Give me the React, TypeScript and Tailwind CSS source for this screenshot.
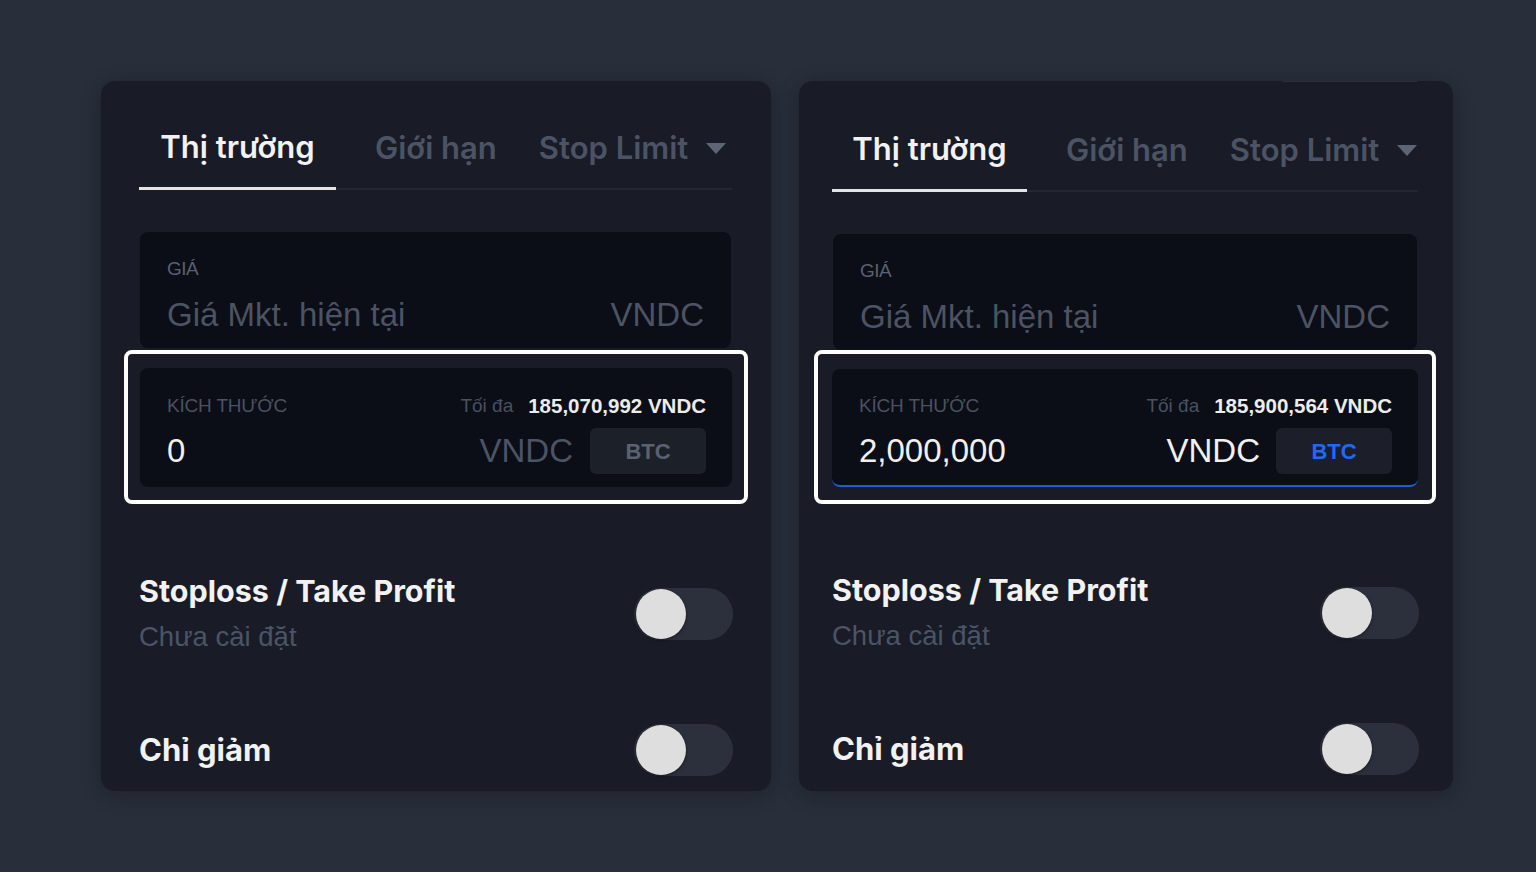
import React from "react";

const sans = { fontFamily: '"Liberation Sans", Arial, sans-serif' };
const inter = { fontFamily: 'Inter, "Noto Sans", sans-serif' };

function Toggle() {
  return (
    <div className="relative h-[52px] w-[99px] shrink-0 rounded-full bg-[#2c303c]">
      <div className="absolute left-[2px] top-[1px] h-[50px] w-[50px] rounded-full bg-[#dedede] shadow-[0_1px_3px_rgba(0,0,0,0.5)]" />
    </div>
  );
}

type CardProps = {
  variant: "left" | "right";
};

function Card({ variant }: CardProps) {
  const isRight = variant === "right";
  return (
    <div
      className={
        isRight
          ? "relative flex h-[710px] w-[654px] flex-col rounded-[14px] bg-[#191c26] pl-[33px] pr-[35px] pt-[50px] shadow-[0_4px_20px_rgba(0,0,0,0.25)]"
          : "relative flex h-[710px] w-[670px] flex-col rounded-[14px] bg-[#191c26] pl-[38px] pr-[39px] pt-[48px] shadow-[0_4px_20px_rgba(0,0,0,0.25)]"
      }
    >
      {isRight && (
        <div className="absolute right-[36px] top-0 h-[1px] w-[134px] bg-[#2a303c]" />
      )}
      {/* Tabs */}
      <div className="flex items-end border-b-2 border-[#232733]" style={inter}>
        <div className={isRight ? "-mb-[2px] w-[195px] border-b-[3px] border-[#e4e4e4] pb-[22px] text-center text-[31px] font-semibold leading-[36px] text-[#f2f2f2]" : "-mb-[2px] w-[197px] border-b-[3px] border-[#e4e4e4] pb-[22px] text-center text-[31px] font-semibold leading-[36px] text-[#f2f2f2]"}>
          Thị trường
        </div>
        <div className="ml-[39px] pb-[22px] text-[31px] font-semibold leading-[36px] text-[#4b5365]">Giới hạn</div>
        <div className="ml-[42px] flex items-center pb-[22px] text-[31px] font-semibold leading-[36px] text-[#4b5365]">
          <span>Stop Limit</span>
          <svg className="ml-[18px]" width="20" height="11" viewBox="0 0 20 11">
            <path d="M0 0 L20 0 L10 11 Z" fill="#5c6476" />
          </svg>
        </div>
      </div>

      {/* Price box */}
      <div className="mt-[42px] mx-[1px] flex h-[116px] flex-col rounded-[8px] bg-[#0b0e16] px-[27px] pt-[26px]" style={sans}>
        <div className="text-[19px] leading-[22px] tracking-[-0.03em] text-[#596071]">GIÁ</div>
        <div className="mt-[16px] flex items-center justify-between text-[33px] leading-[38px] text-[#4c5363]">
          <span>Giá Mkt. hiện tại</span>
          <span>VNDC</span>
        </div>
      </div>

      {/* Highlighted size box */}
      <div
        className={
          isRight
            ? "-mx-[18px] mt-0 rounded-[8px] border-4 border-white px-[14px] pb-[13px] pt-[15px]"
            : "-ml-[15px] -mr-[16px] mt-[2px] rounded-[8px] border-4 border-white pl-[12px] pr-[12px] pb-[13px] pt-[14px]"
        }
      >
        <div
          className={
            isRight
              ? "flex h-[118px] flex-col rounded-[8px] border-b-2 border-[#1b5fd8] bg-[#0b0e16] pl-[27px] pr-[26px] pt-[26px]"
              : "flex h-[119px] flex-col rounded-[8px] bg-[#0b0e16] pl-[27px] pr-[26px] pt-[27px]"
          }
          style={sans}
        >
          <div className="flex items-center justify-between leading-[22px]">
            <span className="text-[19px] tracking-[-0.01em] text-[#4a5161]">KÍCH THƯỚC</span>
            <span className="flex items-center">
              <span className="text-[19px] text-[#495060]">Tối đa</span>
              <span className="ml-[15px] text-[20.5px] font-bold text-[#ececec]">
                {isRight ? "185,900,564 VNDC" : "185,070,992 VNDC"}
              </span>
            </span>
          </div>
          <div className="mt-[11px] flex items-center">
            <span className="flex-1 text-[33px] leading-[38px] text-[#f0f0f0]">
              {isRight ? "2,000,000" : "0"}
            </span>
            <span className={isRight ? "text-[33px] leading-[38px] text-[#f0f0f0]" : "text-[33px] leading-[38px] text-[#4c5363]"}>VNDC</span>
            <div
              className={
                isRight
                  ? "ml-[16px] flex h-[46px] w-[116px] items-center justify-center rounded-[6px] bg-[#1c1f29] text-[22px] font-bold text-[#1e69f5]"
                  : "ml-[17px] flex h-[46px] w-[116px] items-center justify-center rounded-[6px] bg-[#1c2029] text-[22px] font-bold text-[#5a6171]"
              }
            >
              BTC
            </div>
          </div>
        </div>
      </div>

      {/* Stoploss row */}
      <div className={isRight ? "mt-[69px] flex items-center justify-between" : "mt-[70px] flex items-center justify-between"}>
        <div className="flex flex-col">
          <span className="text-[30.5px] font-bold leading-[34px] text-[#f2f2f2]" style={inter}>Stoploss / Take Profit</span>
          <span className="mt-[12px] text-[27.5px] leading-[34px] text-[#4b5466]" style={sans}>Chưa cài đặt</span>
        </div>
        <div className="-mr-[1px]">
          <Toggle />
        </div>
      </div>

      {/* Chi giam row */}
      <div className="mt-[70px] flex items-center justify-between">
        <span className="text-[31px] font-bold leading-[34px] text-[#f2f2f2]" style={inter}>Chỉ giảm</span>
        <div className="-mr-[1px]">
          <Toggle />
        </div>
      </div>
    </div>
  );
}

export default function App() {
  return (
    <div className="flex h-[872px] w-[1536px] items-start gap-[28px] overflow-hidden bg-[#282e3a] pl-[101px] pt-[81px]">
      <Card variant="left" />
      <Card variant="right" />
    </div>
  );
}
